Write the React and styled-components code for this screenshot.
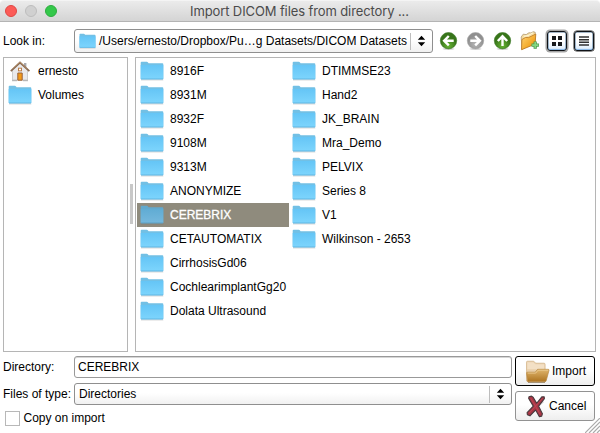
import React from "react";
import styled, { createGlobalStyle } from "styled-components";

const Global = createGlobalStyle`
  *{box-sizing:border-box}
  body{margin:0;background:#fff;font:12px/14px "Liberation Sans",Arial,sans-serif;color:#000}
  svg{display:block;flex:none}
`;
const Window = styled.main`
  width:600px;height:433px;display:flex;flex-direction:column;background:#fff;
  position:relative;overflow:hidden;
`;
const TitleBar = styled.header`
  height:22px;flex:none;display:flex;align-items:center;
  background:linear-gradient(#ebebeb,#d4d4d4);border-bottom:1px solid #b4b4b4;
  border-top:1px solid #f4f4f4;border-radius:4px 4px 0 0;
`;
const Lights = styled.div`display:flex;gap:8px;padding-left:5px;width:190px;`;
const Light = styled.i`
  width:12px;height:12px;border-radius:50%;
  background:${p => p.$fill};border:1px solid ${p => p.$edge};
`;
const Title = styled.h1`
  margin:0;font:400 13px/18px Inter,sans-serif;color:#4b4b4b;white-space:nowrap;
  letter-spacing:-.11px;
`;
const Toolbar = styled.div`
  display:flex;height:35px;flex:none;padding:7px 0 0 3px;align-items:flex-start;
`;
const Label = styled.label`
  width:71px;flex:none;white-space:nowrap;line-height:${p => p.$h || 24}px;
`;
const Combo = styled.div`
  display:flex;align-items:center;width:${p => p.$w}px;height:${p => p.$h}px;flex:none;
  border:1px solid #8f8f8f;border-radius:3px;padding-left:4px;
  background:linear-gradient(#fff 45%,#f1f1f1);
`;
const ComboText = styled.span`flex:1;white-space:nowrap;padding-left:${p => p.$pad || 0}px;`;
const Stepper = styled.span`
  width:22px;height:17px;border-left:1px solid #bdbdbd;display:flex;
  align-items:center;justify-content:center;padding-right:1px;
`;
const Tools = styled.div`display:flex;padding-left:6px;align-items:center;height:24px;`;
const Tool = styled.span`width:27px;flex:none;`;
const ViewButton = styled.button`
  width:20px;height:20px;margin:0 ${p => (p.$on ? 7 : 6)}px 0 0;padding:0;flex:none;
  display:flex;align-items:center;justify-content:center;border-radius:3px;
  border:solid #101317;border-width:${p => (p.$on ? "1.5px" : "1.5px 1px")};
  background:linear-gradient(#fff 50%,#dcecfb);
  box-shadow:inset 0 -1px 1px #8cbcec,inset 0 0 0 .5px #537594${p => (p.$on ? ",0 0 0 1.5px #a5a5a5" : ",0 0 0 .5px #222")};
`;
const Panes = styled.div`display:flex;height:295px;flex:none;padding-left:3px;`;
const Pane = styled.div`
  border:1px solid #b5b5b5;height:295px;width:${p => p.$w}px;display:flex;
  align-items:flex-start;padding-top:1px;
`;
const Splitter = styled.div`
  width:7px;display:flex;align-items:flex-start;justify-content:center;padding-top:127px;
  &::after{content:"";width:3px;height:40px;background:#c8c8c8;}
`;
const Column = styled.ul`
  list-style:none;margin:0;padding:0 0 0 ${p => p.$inset}px;width:${p => p.$w}px;
`;
const Entry = styled.li`
  height:24px;width:${p => p.$w}px;display:flex;align-items:center;gap:6px;padding-left:3px;
  white-space:nowrap;color:${p => (p.$selected ? "#fff" : "#000")};
  -webkit-text-stroke:${p => (p.$selected ? ".3px #fff" : "0")};
  background:${p => (p.$selected ? "#8f8b7d" : "transparent")};
`;
const Footer = styled.footer`display:flex;gap:3px;padding:4px 0 0 3px;`;
const Form = styled.div`width:509px;display:flex;flex-direction:column;`;
const FormRow = styled.div`display:flex;height:27px;`;
const Field = styled.input`
  width:438px;height:22px;border:1px solid #999;border-radius:3px;background:#fff;
  padding:0 3px;font:inherit;color:#000;outline:0;box-shadow:inset 0 1px #d6d6d6;
`;
const Check = styled.label`
  display:flex;gap:5px;align-items:center;padding-left:2px;height:14px;margin-top:1px;
  &::before{content:"";width:13px;height:13px;margin-right:-1.5px;border:1px solid #b8b8b8;background:#fff;}
`;
const Actions = styled.div`display:flex;flex-direction:column;gap:5px;`;
const Action = styled.button`
  width:80px;height:30px;display:flex;align-items:center;border-radius:3px;
  border:1px solid ${p => (p.$primary ? "#000" : "#929292")};padding:0 0 0 9px;
  background:linear-gradient(#fff 45%,#eee);font:inherit;color:#000;gap:${p => p.$gap}px;
`;
const Grip = styled.svg`position:absolute;right:0;bottom:0;`;

const Folder = ({ small, dim }) => (
  <svg width={small ? 17 : 24} height={small ? 16 : 20} viewBox="0 0 24 20" preserveAspectRatio="none">
    <defs>
      <linearGradient id="folderFace" x2="0" y2="1"><stop stopColor="#65c5f6" /><stop offset="1" stopColor="#7dd5fd" /></linearGradient>
      <linearGradient id="folderDim" x2="0" y2="1"><stop stopColor="#60acd4" /><stop offset="1" stopColor="#76b8dc" /></linearGradient>
    </defs>
    <path d="M1 18.9h22.3" stroke="#777" strokeOpacity=".35" />
    <path d="M.7 18V1.7Q.7.8 1.6.8h5.2q.8 0 1.2.7l.6.8h13.8q.9 0 .9.9V18z" fill={dim ? "#61a9ce" : "#72c0e5"} />
    <path d="M.7 4h22.6v13.6q0 .7-.7.7H1.4q-.7 0-.7-.7z" fill={dim ? "url(#folderDim)" : "url(#folderFace)"} />
    <path d="M1 18h22" stroke={dim ? "#579abd" : "#58addb"} strokeWidth=".8" />
  </svg>
);
const Home = () => (
  <svg width="24" height="22" viewBox="0 0 24 22">
    <path d="M4.5 10 12 3.2l7.5 6.8v10H4.5z" fill="#e9e9eb" stroke="#bbb" strokeWidth=".7" />
    <path d="M16 3h2.4v5L16 6z" fill="#a9a9ad" />
    <path d="m2.8 11.2 9.2-8.6 9.4 8.6" fill="none" stroke="#8b6b50" strokeWidth="1.8" />
    <path d="m4.8 8.5 7.2-6.4 7 6.4" fill="none" stroke="#c39a72" strokeWidth=".6" />
    <rect x="10.5" y="8.2" width="3" height="2.6" fill="#fff" stroke="#b97d48" />
    <path d="M9.8 13h4.4v7.2H9.8z" fill="#f39a18" stroke="#9b623a" />
    <path d="M4 20.7h5m6 0h5" stroke="#999" strokeWidth=".8" />
  </svg>
);
const Arrow = ({ gray, turn = 0 }) => (
  <svg width="19" height="20" viewBox="0 0 19 20">
    <defs>
      <radialGradient id="green" cy=".8"><stop stopColor="#66b334" /><stop offset="1" stopColor="#38751a" /></radialGradient>
      <radialGradient id="gray" cy=".7"><stop stopColor="#b7b7b7" /><stop offset="1" stopColor="#8f8f8f" /></radialGradient>
    </defs>
    <ellipse cx="9.5" cy="18" rx="6" ry=".9" fill="#999" opacity=".4" />
    <circle cx="9.5" cy="9.7" r="8.2" fill={gray ? "url(#gray)" : "url(#green)"} stroke={gray ? "#a2a2a2" : "#387621"} strokeWidth=".6" />
    <path transform={`rotate(${turn} 9.5 9.7)`} d="M9.8 5 5.1 9.7l4.7 4.7M5.5 9.7h9.2" fill="none" stroke="#fff" strokeWidth="2.4" />
  </svg>
);
const NewFolder = () => (
  <svg width="19" height="20" viewBox="0 0 19 20">
    <defs><linearGradient id="gold" x2="1" y2="1"><stop stopColor="#ffd778" /><stop offset=".8" stopColor="#f09b12" /></linearGradient></defs>
    <path d="m1.2 6 2-2.8 3 .4L9 1.7l2 .3 2.2-1.3 2 .6v10L2 18.4z" fill="#f5dda0" stroke="#b39b74" strokeWidth=".8" />
    <path d="m4 5.3 4-.7 5-2.8" fill="none" stroke="#fff9df" />
    <path d="m1.5 18.7.4-10.2 3.6-2 3 .1L15.8 3l-.7 10.2z" fill="url(#gold)" stroke="#b97624" strokeWidth=".8" />
    <path d="M15.2 10.4v7.4M11.5 14.1h7.4" stroke="#4c9c4e" strokeWidth="3.2" />
    <path d="M15.2 11.1v6M12.2 14.1h6" stroke="#85d782" strokeWidth="1.6" />
  </svg>
);
const Chevrons = () => <svg width="9" height="12" viewBox="0 0 9 12"><path d="m.8 4.7 3.7-4 3.7 4zM.8 7.3h7.4l-3.7 4z" /></svg>;
const OpenFolder = () => (
  <svg width="26" height="25" viewBox="0 0 26 25">
    <defs><linearGradient id="openFace" x2="0" y2="1"><stop stopColor="#e0b66d" /><stop offset="1" stopColor="#ad7320" /></linearGradient></defs>
    <path d="M1.5 22V3.2q0-1 1-1h6.2l2 2H19q1.1 0 1.1 1.1V12L3 22.5z" fill="#e9cfaa" stroke="#d1b084" strokeWidth=".7" />
    <path d="M2.3 3.2h6l2 2h9v5H2.3z" fill="#f3e0c5" />
    <path d="m2.7 22.7-1.1-8.5q-.1-1 .9-1h7.7l2.5-2.9h10.5q1 0 .8 1l-2.8 10.4q-.3 1-1.3 1z" fill="url(#openFace)" stroke="#b68641" strokeWidth=".7" />
    <path d="M2.7 14.1h8l2.4-2.9h10" fill="none" stroke="#edcf98" strokeWidth=".8" />
    <path d="M3 23.5h17" stroke="#8a7350" strokeWidth=".7" />
  </svg>
);
const RedX = () => (
  <svg width="22" height="26" viewBox="0 0 22 26">
    <path d="m4 23 6-8 7 7M3 21l15-13" stroke="#999" strokeWidth="3" opacity=".35" fill="none" />
    <path d="m4 3.7 2.5-.6 1.5 1 3.7 6.2 5.1-6.4 2.4-.2.2 1.9-5.8 7.6 3.8 7.5-.7 2.4-2.3.6-3.8-6.7-5.5 5.7-2.7-1-.3-2 6.2-6.6-4.6-7.7z" fill="#a93545" stroke="#493a3e" strokeWidth="1.1" strokeLinejoin="round" />
    <path d="m5.8 5.2 9.3 16M17.6 5.4 4.2 20" stroke="#bc4855" />
  </svg>
);

const first = ["8916F", "8931M", "8932F", "9108M", "9313M", "ANONYMIZE", "CEREBRIX", "CETAUTOMATIX", "CirrhosisGd06", "CochlearimplantGg20", "Dolata Ultrasound"];
const second = ["DTIMMSE23", "Hand2", "JK_BRAIN", "Mra_Demo", "PELVIX", "Series 8", "V1", "Wilkinson - 2653"];

export default function App() {
  return (
    <><Global /><Window>
      <TitleBar>
        <Lights><Light $fill="#fc5b57" $edge="#df4744" /><Light $fill="#d0d0d0" $edge="#bdbdbd" /><Light $fill="#34c84a" $edge="#2dac3f" /></Lights>
        <Title>Import DICOM files from directory ...</Title>
      </TitleBar>
      <Toolbar>
        <Label>Look in:</Label>
        <Combo $w={359} $h={24}><Folder small /><ComboText $pad={3}>/Users/ernesto/Dropbox/Pu…g Datasets/DICOM Datasets</ComboText><Stepper><Chevrons /></Stepper></Combo>
        <Tools>
          <Tool><Arrow /></Tool><Tool><Arrow gray turn={180} /></Tool><Tool><Arrow turn={90} /></Tool><Tool><NewFolder /></Tool>
          <ViewButton $on aria-label="Grid view"><svg width="12" height="12"><path d="M1 1h4v4H1zm6 0h4v4H7zM1 7h4v4H1zm6 0h4v4H7z" fill="#17191b" /></svg></ViewButton>
          <ViewButton aria-label="List view"><svg width="10" height="10"><path d="M0 1h10M0 3.7h10M0 6.3h10M0 9h10" stroke="#303030" strokeWidth="1.5" /></svg></ViewButton>
        </Tools>
      </Toolbar>
      <Panes>
        <Pane $w={125}><Column $inset={1} $w={120}>
          <Entry $w={120}><Home />ernesto</Entry><Entry $w={120}><Folder />Volumes</Entry>
        </Column></Pane>
        <Splitter />
        <Pane $w={461}>
          <Column $inset={1} $w={153}>{first.map(n => <Entry key={n} $w={152} $selected={n === "CEREBRIX"}><Folder dim={n === "CEREBRIX"} />{n}</Entry>)}</Column>
          <Column $inset={0} $w={150}>{second.map(n => <Entry key={n} $w={150}><Folder />{n}</Entry>)}</Column>
        </Pane>
      </Panes>
      <Footer>
        <Form>
          <FormRow><Label $h={22}>Directory:</Label><Field defaultValue="CEREBRIX" aria-label="Directory" /></FormRow>
          <FormRow><Label $h={22}>Files of type:</Label><Combo $w={438} $h={22}><ComboText>Directories</ComboText><Stepper><Chevrons /></Stepper></Combo></FormRow>
          <Check>Copy on import</Check>
        </Form>
        <Actions><Action $primary $gap={1}><OpenFolder />Import</Action><Action $gap={2}><RedX />Cancel</Action></Actions>
      </Footer>
      <Grip width="15" height="15" viewBox="0 0 15 15"><path d="M0 15 15 0M4 15 15 4M8 15l7-7M12 15l3-3" stroke="#aaa" strokeWidth="1.2" /></Grip>
    </Window></>
  );
}
